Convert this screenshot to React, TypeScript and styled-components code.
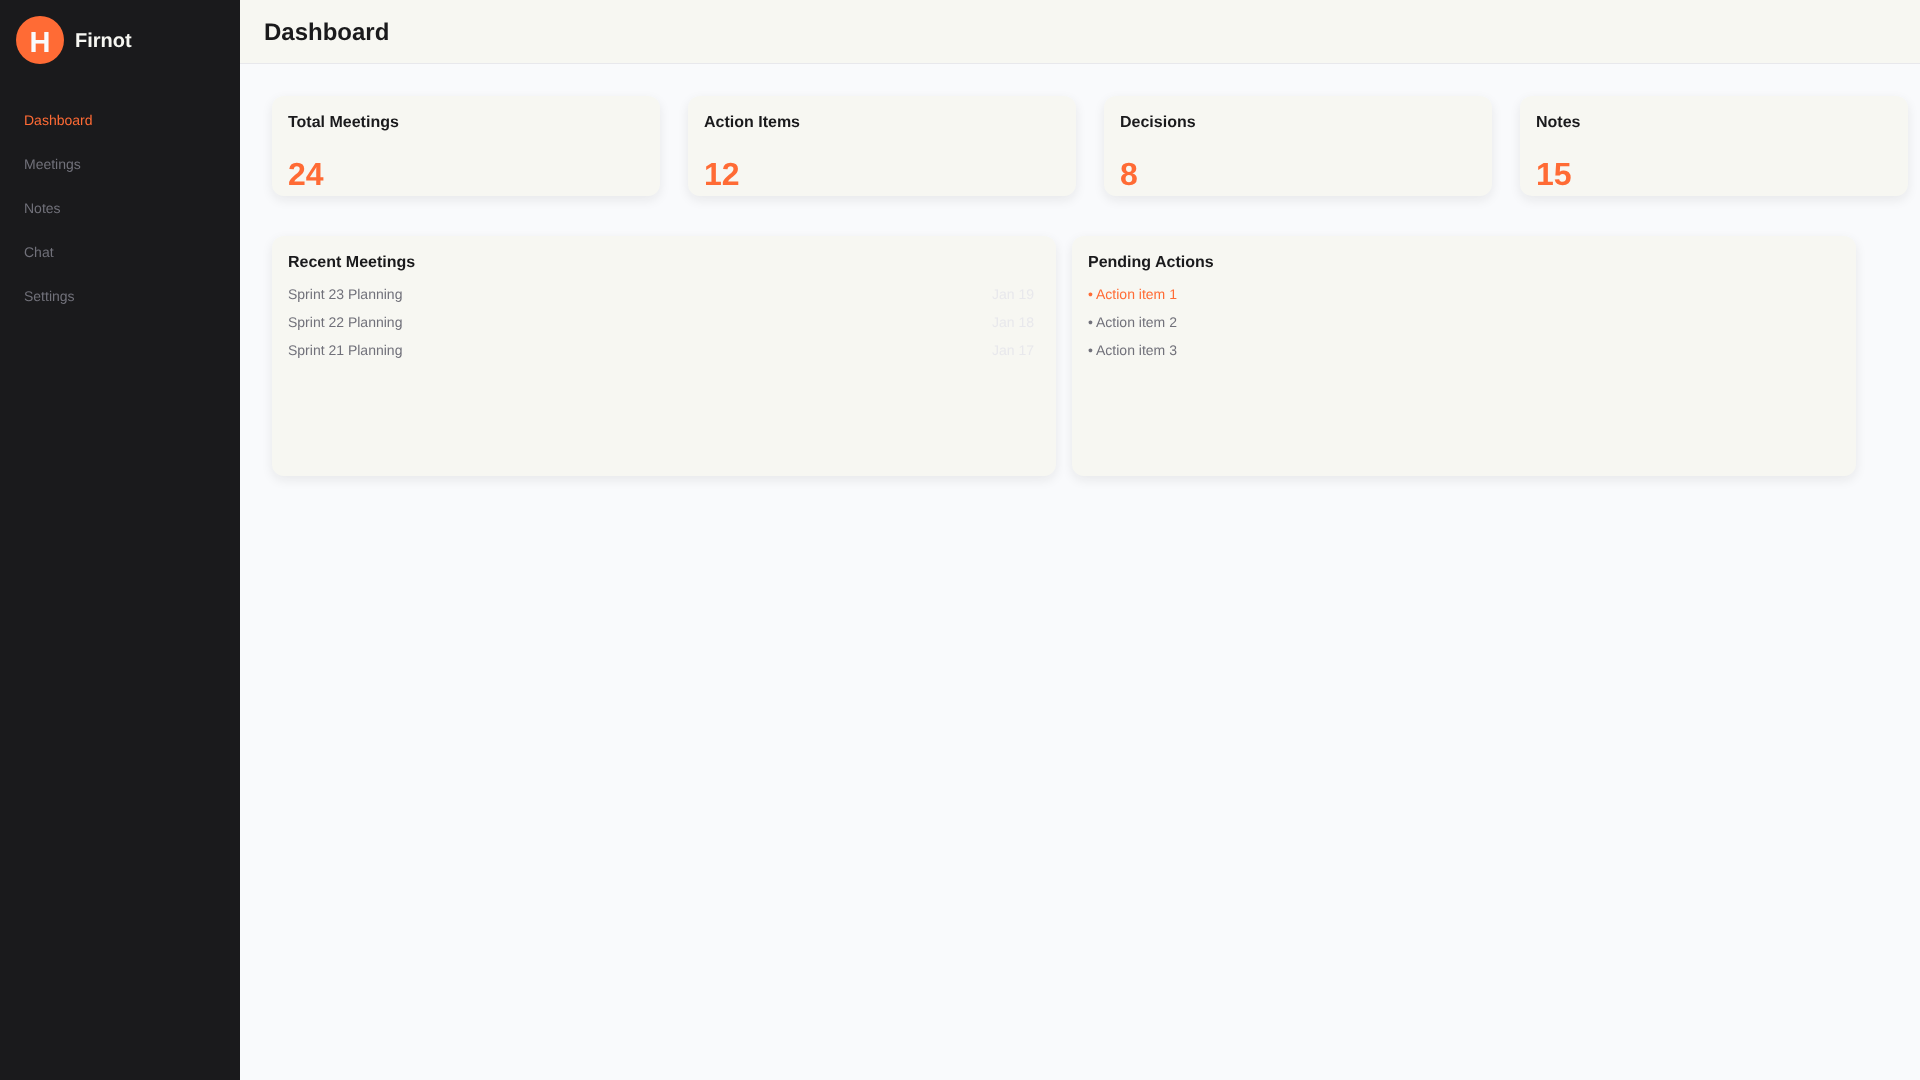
import React from "react";
import styled, { createGlobalStyle } from "styled-components";

const GlobalStyle = createGlobalStyle`
  * {
    box-sizing: border-box;
  }

  html,
  body {
    margin: 0;
    padding: 0;
    background: #f9fafc;
    font-family: "Liberation Sans", Arial, sans-serif;
    text-rendering: geometricPrecision;
  }
`;

const Layout = styled.div`
  display: flex;
  min-height: 1080px;
  will-change: transform;
`;

const Sidebar = styled.aside`
  width: 240px;
  flex-shrink: 0;
  background: #1a1a1c;
  padding: 16px 0 0;
`;

const Brand = styled.div`
  display: flex;
  align-items: center;
  gap: 11px;
  padding: 0 16px;
  margin-bottom: 34px;
`;

const LogoMark = styled.div`
  width: 48px;
  height: 48px;
  border-radius: 50%;
  background: #ff6b35;
  color: #f9fafc;
  font-size: 29px;
  font-weight: 700;
  line-height: 54px;
  text-align: center;
`;

const BrandName = styled.span`
  color: #f7f7f2;
  font-size: 20px;
  font-weight: 700;
  padding-top: 2px;
`;

const Nav = styled.nav`
  display: flex;
  flex-direction: column;
`;

const NavItem = styled.a<{ $active?: boolean }>`
  height: 44px;
  padding: 0 24px;
  display: flex;
  align-items: center;
  font-size: 14px;
  color: ${({ $active }) => ($active ? "#ff6b35" : "#71717a")};
`;

const Main = styled.main`
  flex: 1;
  min-width: 0;
`;

const Header = styled.header`
  height: 64px;
  padding: 2px 24px 0;
  display: flex;
  align-items: center;
  background: #f7f7f2;
  border-bottom: 1px solid #e8e8ec;
`;

const Title = styled.h1`
  margin: 0;
  font-size: 24px;
  font-weight: 700;
  color: #1a1a1c;
`;

const Content = styled.div`
  padding: 32px 12px 32px 32px;
`;

const StatGrid = styled.div`
  display: grid;
  grid-template-columns: repeat(4, 388px);
  gap: 28px;
  margin-bottom: 40px;
`;

const Card = styled.section`
  background: #f7f7f2;
  border-radius: 12px;
  box-shadow: 0 4px 12px rgba(26, 26, 28, 0.08);
  padding: 18px 16px 16px;
`;

const StatCard = styled(Card)`
  height: 100px;
`;

const CardTitle = styled.h3`
  margin: 0;
  font-size: 16px;
  line-height: 18px;
  font-weight: 700;
  color: #1a1a1c;
`;

const StatValue = styled.div`
  margin-top: 24px;
  font-size: 32px;
  line-height: 37px;
  font-weight: 700;
  color: #ff6b35;
`;

const PanelGrid = styled.div`
  display: grid;
  grid-template-columns: repeat(2, 784px);
  gap: 16px;
`;

const Panel = styled(Card)`
  height: 240px;
  padding-right: 22px;
`;

const List = styled.ul`
  list-style: none;
  margin: 8px 0 0;
  padding: 0;
`;

const Row = styled.li<{ $active?: boolean }>`
  height: 28px;
  display: flex;
  align-items: center;
  justify-content: space-between;
  font-size: 14px;
  color: ${({ $active }) => ($active ? "#ff6b35" : "#71717a")};
`;

const RowDate = styled.span`
  color: #e8e8ec;
`;

const navItems = ["Dashboard", "Meetings", "Notes", "Chat", "Settings"];

const stats = [
  { label: "Total Meetings", value: 24 },
  { label: "Action Items", value: 12 },
  { label: "Decisions", value: 8 },
  { label: "Notes", value: 15 },
];

const meetings = [
  { name: "Sprint 23 Planning", date: "Jan 19" },
  { name: "Sprint 22 Planning", date: "Jan 18" },
  { name: "Sprint 21 Planning", date: "Jan 17" },
];

const actions = ["Action item 1", "Action item 2", "Action item 3"];

const App = () => {
  return (
    <Layout>
      <GlobalStyle />
      <Sidebar>
        <Brand>
          <LogoMark>H</LogoMark>
          <BrandName>Firnot</BrandName>
        </Brand>
        <Nav>
          {navItems.map((item, i) => (
            <NavItem key={item} $active={i === 0}>
              {item}
            </NavItem>
          ))}
        </Nav>
      </Sidebar>
      <Main>
        <Header>
          <Title>Dashboard</Title>
        </Header>
        <Content>
          <StatGrid>
            {stats.map((stat) => (
              <StatCard key={stat.label}>
                <CardTitle>{stat.label}</CardTitle>
                <StatValue>{stat.value}</StatValue>
              </StatCard>
            ))}
          </StatGrid>
          <PanelGrid>
            <Panel>
              <CardTitle>Recent Meetings</CardTitle>
              <List>
                {meetings.map((meeting) => (
                  <Row key={meeting.name}>
                    <span>{meeting.name}</span>
                    <RowDate>{meeting.date}</RowDate>
                  </Row>
                ))}
              </List>
            </Panel>
            <Panel>
              <CardTitle>Pending Actions</CardTitle>
              <List>
                {actions.map((action, i) => (
                  <Row key={action} $active={i === 0}>
                    <span>• {action}</span>
                  </Row>
                ))}
              </List>
            </Panel>
          </PanelGrid>
        </Content>
      </Main>
    </Layout>
  );
};

export default App;
